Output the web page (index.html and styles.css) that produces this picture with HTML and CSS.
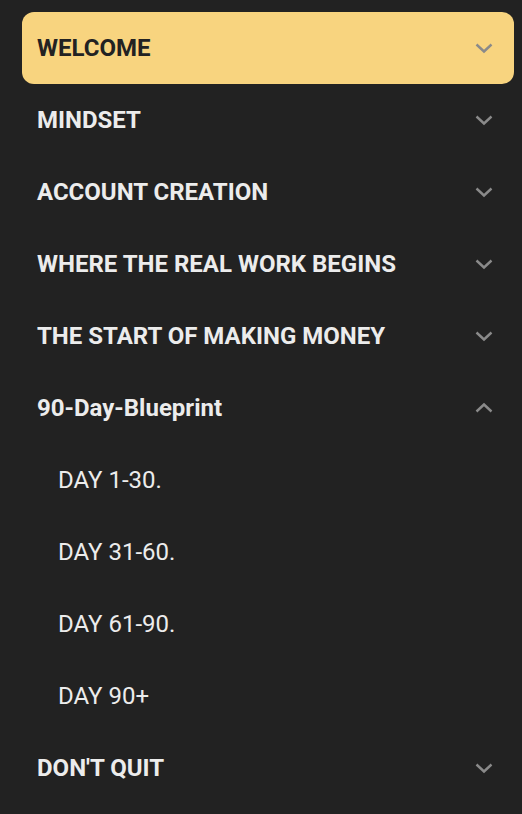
FILE: index.html
```html
<!DOCTYPE html>
<html>
<head>
<meta charset="utf-8">
<link rel="stylesheet" href="styles.css">
</head>
<body>
<nav class="menu">
  <div class="item active"><span class="label">WELCOME</span><svg class="chev" viewBox="0 0 18 12"><path d="M1.5 2.5 L9 9.5 L16.5 2.5"/></svg></div>
  <div class="item"><span class="label">MINDSET</span><svg class="chev" viewBox="0 0 18 12"><path d="M1.5 2.5 L9 9.5 L16.5 2.5"/></svg></div>
  <div class="item"><span class="label">ACCOUNT CREATION</span><svg class="chev" viewBox="0 0 18 12"><path d="M1.5 2.5 L9 9.5 L16.5 2.5"/></svg></div>
  <div class="item"><span class="label">WHERE THE REAL WORK BEGINS</span><svg class="chev" viewBox="0 0 18 12"><path d="M1.5 2.5 L9 9.5 L16.5 2.5"/></svg></div>
  <div class="item"><span class="label">THE START OF MAKING MONEY</span><svg class="chev" viewBox="0 0 18 12"><path d="M1.5 2.5 L9 9.5 L16.5 2.5"/></svg></div>
  <div class="item"><span class="label">90-Day-Blueprint</span><svg class="chev" viewBox="0 0 18 12"><path d="M1.5 9.5 L9 2.5 L16.5 9.5"/></svg></div>
  <div class="sub">DAY 1-30.</div>
  <div class="sub">DAY 31-60.</div>
  <div class="sub">DAY 61-90.</div>
  <div class="sub">DAY 90+</div>
  <div class="item"><span class="label">DON'T QUIT</span><svg class="chev" viewBox="0 0 18 12"><path d="M1.5 2.5 L9 9.5 L16.5 2.5"/></svg></div>
</nav>
</body>
</html>
```
FILE: styles.css
```css
html, body {
  margin: 0;
  padding: 0;
  background: #222222;
  font-family: Roboto, "Liberation Sans", sans-serif;
}
.menu {
  display: flex;
  flex-direction: column;
  padding: 12px 8px 0 22px;
}
.item {
  height: 72px;
  display: flex;
  align-items: center;
  justify-content: space-between;
  padding: 0 21px 0 15px;
  border-radius: 12px;
  color: #ececec;
  font-weight: 700;
  font-size: 24px;
}
.item.active {
  background: #f8d47f;
  color: #222222;
}
.chev {
  width: 18px;
  height: 12px;
  fill: none;
  stroke: #8a8a8a;
  stroke-width: 2.4;
}
.sub {
  height: 72px;
  display: flex;
  align-items: center;
  padding-left: 36px;
  color: #ececec;
  font-size: 24px;
  font-weight: 400;
}
```
